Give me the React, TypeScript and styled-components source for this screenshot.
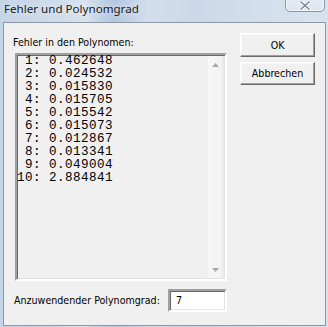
import React from "react";
import styled, { createGlobalStyle } from "styled-components";

const Global = createGlobalStyle`
  html, body { margin: 0; padding: 0; }
  body { width: 328px; height: 327px; overflow: hidden; }
`;

const Frame = styled.div`
  width: 328px;
  height: 327px;
  box-sizing: border-box;
  display: flex;
  flex-direction: column;
  background: linear-gradient(90deg, #c4d4e7 0%, #cfdcec 18%, #d9e3ef 26%, #bccde4 32%, #b4c7e1 35%, #d2deec 45%, #cad8e9 60%, #d3dfec 80%, #d8e2ee 100%);
  padding: 0 2px 1px 3px;
  position: relative;
`;

const TitleBar = styled.div`
  height: 22px;
  display: flex;
  align-items: flex-start;
  padding-left: 1px;
`;

const Title = styled.span`
  font-family: "Noto Sans", "Open Sans", sans-serif;
  font-size: 11.6px;
  line-height: 18px;
  color: #1a1a1a;
  text-shadow: 0 0 6px rgba(255, 255, 255, 0.9);
`;

const CloseButton = styled.div`
  position: absolute;
  left: 285px;
  top: -3px;
  width: 40px;
  height: 15px;
  box-sizing: border-box;
  border: 1px solid #8896a8;
  border-radius: 0 0 5px 5px;
  background: linear-gradient(180deg, rgba(255,255,255,0.35), rgba(225,233,243,0.6));
  box-shadow: inset 0 0 0 1px rgba(255,255,255,0.6);
  display: flex;
  align-items: center;
  justify-content: center;
  padding-top: 2px;
`;

const Client = styled.div`
  flex: 1;
  box-sizing: border-box;
  border: 1px solid #8d97a3;
  background: #f0f0f0;
  display: flex;
  flex-direction: row;
`;

const LeftColumn = styled.div`
  width: 214px;
  display: flex;
  flex-direction: column;
  padding: 13px 0 0 9px;
`;

const RightColumn = styled.div`
  display: flex;
  flex-direction: column;
  gap: 5px;
  padding: 10px 0 0 13px;
`;

const DlgText = styled.span<{ $ml?: number }>`
  font-family: "DejaVu Sans Condensed", "DejaVu Sans", Tahoma, sans-serif;
  font-stretch: condensed;
  font-size: 10.6px;
  line-height: 13px;
  color: #000;
  margin-left: ${(p) => p.$ml ?? 0}px;
  white-space: nowrap;
`;

const ListBox = styled.div`
  margin: 4px 0 0 2px;
  width: 212px;
  height: 228px;
  box-sizing: border-box;
  border-style: solid;
  border-width: 2px;
  border-color: #a0a0a0 #ffffff #ffffff #a0a0a0;
  box-shadow: inset 1px 1px 0 #696969, inset -1px -1px 0 #e3e3e3;
  background: #f0f0f0;
  display: flex;
  flex-direction: row;
`;

const Lines = styled.div`
  flex: 1;
  padding-top: 0;
`;

const Line = styled.div`
  font-family: "Liberation Mono", "Courier New", monospace;
  font-size: 12.6px;
  letter-spacing: 0.44px;
  line-height: 13px;
  height: 13px;
  color: #000;
  white-space: pre;
`;

const ScrollBar = styled.div`
  width: 17px;
  margin: 1px 1px 1px 0;
  display: flex;
  flex-direction: column;
  background: linear-gradient(90deg, #e6e6e6 0px, #f6f6f6 1px, #f3f3f3 14px, #e9e9e9 16px);
`;

const ScrollArrow = styled.div`
  height: 17px;
  display: flex;
  align-items: center;
  justify-content: center;
`;

const ScrollTrack = styled.div`
  flex: 1;
`;

const BottomRow = styled.div`
  display: flex;
  flex-direction: row;
  align-items: center;
  justify-content: space-between;
  margin-top: 8px;
`;

const TextInput = styled.div`
  width: 59px;
  height: 23px;
  box-sizing: border-box;
  border-style: solid;
  border-width: 2px;
  border-color: #a0a0a0 #ffffff #ffffff #a0a0a0;
  box-shadow: inset 1px 1px 0 #696969, inset -1px -1px 0 #e3e3e3;
  background: #fff;
  display: flex;
  align-items: center;
  padding-left: 6px;
`;

const Button = styled.div<{ $h: number }>`
  width: 75px;
  height: ${(p) => p.$h}px;
  box-sizing: border-box;
  border-style: solid;
  border-width: 1px;
  border-color: #ffffff #696969 #696969 #ffffff;
  box-shadow: inset -1px -1px 0 #a0a0a0, inset 1px 1px 0 #f8f8f8;
  background: #f0f0f0;
  display: flex;
  align-items: center;
  justify-content: center;
`;

const values = [
  "0.462648",
  "0.024532",
  "0.015830",
  "0.015705",
  "0.015542",
  "0.015073",
  "0.012867",
  "0.013341",
  "0.049004",
  "2.884841",
];

export default function App() {
  return (
    <>
      <Global />
      <Frame>
        <TitleBar>
          <Title>Fehler und Polynomgrad</Title>
        </TitleBar>
        <CloseButton>
          <svg width="12" height="9" viewBox="0 0 12 9">
            <path d="M2 1 L10 8 M10 1 L2 8" stroke="#ffffff" strokeWidth="3.4" strokeLinecap="round" />
            <path d="M2 1 L10 8 M10 1 L2 8" stroke="#7c8591" strokeWidth="1.6" strokeLinecap="round" />
          </svg>
        </CloseButton>
        <Client>
          <LeftColumn>
            <DlgText>Fehler in den Polynomen:</DlgText>
            <ListBox>
              <Lines>
                {values.map((v, i) => (
                  <Line key={i}>{`${String(i + 1).padStart(2, " ")}: ${v}`}</Line>
                ))}
              </Lines>
              <ScrollBar>
                <ScrollArrow>
                  <svg width="7" height="4" viewBox="0 0 7 4">
                    <path d="M0 4 L3.5 0 L7 4 Z" fill="#a8a8a8" />
                  </svg>
                </ScrollArrow>
                <ScrollTrack />
                <ScrollArrow>
                  <svg width="7" height="4" viewBox="0 0 7 4">
                    <path d="M0 0 L3.5 4 L7 0 Z" fill="#a8a8a8" />
                  </svg>
                </ScrollArrow>
              </ScrollBar>
            </ListBox>
            <BottomRow>
              <DlgText $ml={1}>Anzuwendender Polynomgrad:</DlgText>
              <TextInput>
                <DlgText>7</DlgText>
              </TextInput>
            </BottomRow>
          </LeftColumn>
          <RightColumn>
            <Button $h={24}>
              <DlgText>OK</DlgText>
            </Button>
            <Button $h={23}>
              <DlgText>Abbrechen</DlgText>
            </Button>
          </RightColumn>
        </Client>
      </Frame>
    </>
  );
}
